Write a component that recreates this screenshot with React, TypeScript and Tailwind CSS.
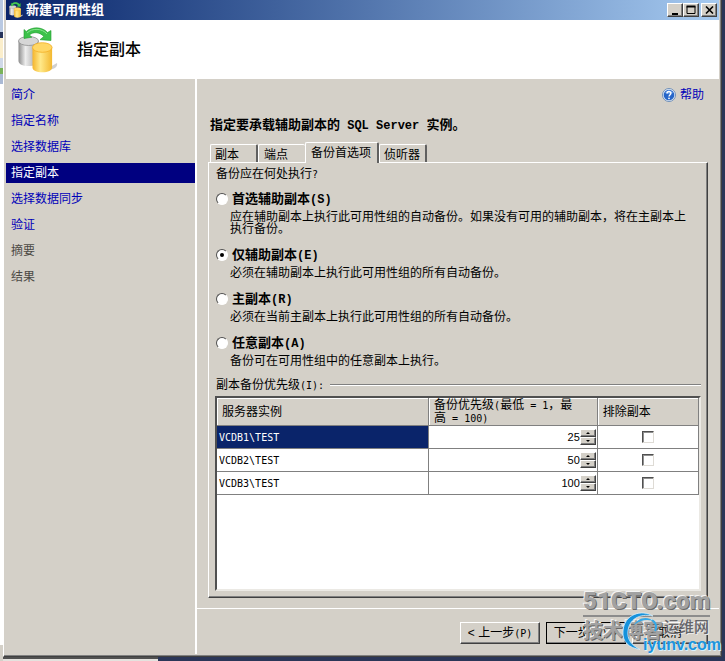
import { useState } from 'react';
import type { ReactNode } from 'react';

const steps = [
  { label: '简介', state: 'done' },
  { label: '指定名称', state: 'done' },
  { label: '选择数据库', state: 'done' },
  { label: '指定副本', state: 'current' },
  { label: '选择数据同步', state: 'done' },
  { label: '验证', state: 'done' },
  { label: '摘要', state: 'pending' },
  { label: '结果', state: 'pending' },
];

const tabs = ['副本', '端点', '备份首选项', '侦听器'];

const options = [
  {
    id: 'prefer',
    label: '首选辅助副本',
    hotkey: '(S)',
    text: '应在辅助副本上执行此可用性组的自动备份。如果没有可用的辅助副本，将在主副本上执行备份。',
  },
  { id: 'only', label: '仅辅助副本', hotkey: '(E)', text: '必须在辅助副本上执行此可用性组的所有自动备份。' },
  { id: 'primary', label: '主副本', hotkey: '(R)', text: '必须在当前主副本上执行此可用性组的所有自动备份。' },
  { id: 'any', label: '任意副本', hotkey: '(A)', text: '备份可在可用性组中的任意副本上执行。' },
];

const servers = [
  { name: 'VCDB1\\TEST', priority: 25 },
  { name: 'VCDB2\\TEST', priority: 50 },
  { name: 'VCDB3\\TEST', priority: 100 },
];

const raised =
  'bg-[#d4d0c8] border border-t-white border-l-white border-r-[#404040] border-b-[#404040] shadow-[inset_-1px_-1px_0_#808080]';

function Latin({ children }: { children: ReactNode }) {
  return <span className="font-['DejaVu_Sans_Mono',monospace] text-[10px] whitespace-pre">{children}</span>;
}

function DatabaseIcon({ className }: { className: string }) {
  return (
    <svg className={className} viewBox="0 0 40 46" aria-hidden="true">
      <defs>
        <linearGradient id="silver" x1="0" x2="1">
          <stop offset="0" stopColor="#8c8c8c" />
          <stop offset="0.35" stopColor="#ededed" />
          <stop offset="1" stopColor="#9a9a9a" />
        </linearGradient>
        <linearGradient id="gold" x1="0" x2="1">
          <stop offset="0" stopColor="#f5b52c" />
          <stop offset="0.4" stopColor="#ffe98a" />
          <stop offset="1" stopColor="#f3b830" />
        </linearGradient>
      </defs>
      <path d="M32 40l7-4c1 4-3 6-8 7z" fill="#d0d0d0" />
      <path d="M0.500 14v20c0 3 4 5 10 5s10-2 10-5V14z" fill="url(#silver)" />
      <ellipse cx="10.500" cy="14" rx="10" ry="4.500" fill="#d6d6d6" stroke="#8f8f8f" strokeWidth="0.800" />
      <path d="M14.500 20.500v20c0 3 4 4.800 9.800 4.800s9.800-1.800 9.800-4.800v-20z" fill="url(#gold)" />
      <ellipse cx="24.300" cy="20.500" rx="9.800" ry="4.800" fill="#ffd766" stroke="#f2ae25" strokeWidth="0.800" />
      <path
        d="M6 2.500l2.300 2C14-.5 24-.5 29.500 5.500L33 3.500V13.500l-11-.8 3.800-3.200C22 5 15 4.500 11.500 8l2.300 2.200L6 11.500z"
        fill="#3cc24a"
        stroke="#229a30"
        strokeWidth="0.600"
      />
      <path d="M9 6C14 1 24 1 29 7" fill="none" stroke="#86e38c" strokeWidth="1" />
    </svg>
  );
}

function HelpIcon() {
  return (
    <svg className="h-3.5 w-3.5" viewBox="0 0 14 14" aria-hidden="true">
      <circle cx="7" cy="7" r="6.500" fill="#e4edf8" stroke="#6f8fb8" />
      <circle cx="7" cy="7" r="5.300" fill="#2766c8" />
      <path d="M3 5a4.400 4.400 0 0 1 8 0C8 6 6 6 3 5z" fill="#6ea4ec" />
      <path d="M5 5.500c0-2.700 4-2.500 3.900-.2C8.900 6.700 7 6.700 7 8.600" fill="none" stroke="#fff" strokeWidth="1.400" />
      <circle cx="7" cy="10.300" r="0.900" fill="#fff" />
    </svg>
  );
}

function TitleBar() {
  const control = `flex h-3.5 w-4 items-center justify-center ${raised}`;
  return (
    <header className="flex h-5 items-center bg-gradient-to-r from-[#0a246a] to-[#a6caf0] pr-0.5 pl-[3px]">
      <DatabaseIcon className="mr-[3px] h-4 w-3.5" />
      <span className="flex-1 text-[13px] leading-5 font-bold text-white">新建可用性组</span>
      <button type="button" aria-label="最小化" className={control}>
        <svg width="10" height="9" viewBox="0 0 10 9">
          <path d="M2 7h6v2H2z" />
        </svg>
      </button>
      <button type="button" aria-label="最大化" className={control}>
        <svg width="10" height="10" viewBox="0 0 10 10">
          <path d="M1 1.500h8v7H1z" fill="none" stroke="#000" />
          <path d="M0.500 0.500h9v2h-9z" />
        </svg>
      </button>
      <button type="button" aria-label="关闭" className={`ml-0.5 ${control}`}>
        <svg width="9" height="8" viewBox="0 0 9 8">
          <path d="M1 .5l7 7M8 .5l-7 7" stroke="#000" strokeWidth="1.600" />
        </svg>
      </button>
    </header>
  );
}

function Sidebar() {
  return (
    <nav className="flex w-[191px] shrink-0 flex-col gap-1.5 border-r-2 border-white pt-1.5">
      {steps.map((step) => (
        <a
          key={step.label}
          href="#"
          className={`h-5 pl-[5px] leading-5 ${
            step.state === 'current'
              ? 'bg-[#000080] text-white'
              : step.state === 'done'
                ? 'text-[#0000b8]'
                : 'text-[#4c4a45]'
          }`}
        >
          {step.label}
        </a>
      ))}
    </nav>
  );
}

function TabStrip() {
  return (
    <div role="tablist" className="flex items-end pl-0.5">
      {tabs.map((tab) => {
        const active = tab === '备份首选项';
        return (
          <button
            key={tab}
            type="button"
            role="tab"
            aria-selected={active}
            className={`rounded-t-[2px] border-t border-l border-white text-left ${
              active
                ? 'relative -mb-px h-[21px] w-[74px] border-r-2 border-r-[#606060] bg-[#d4d0c8] pl-[5px] leading-5'
                : tab === '端点'
                  ? 'h-[18px] w-[47px] pl-[5px] leading-5'
                  : 'h-[18px] w-12 border-r-2 border-r-[#606060] pl-1 leading-5'
            }`}
          >
            {tab}
          </button>
        );
      })}
    </div>
  );
}

function Spinner({ server, value, onChange }: { server: string; value: number; onChange: (v: number) => void }) {
  const arrow = `flex h-2 w-4 items-center justify-center ${raised}`;
  return (
    <div className="flex h-[17px] items-center pr-px">
      <input
        aria-label={`${server} 优先级`}
        value={value}
        onChange={(e) => onChange(Number(e.target.value) || 0)}
        className="h-4 min-w-0 flex-1 bg-transparent text-right font-['Liberation_Sans',sans-serif] text-[11px] leading-4 outline-none"
      />
      <div className="flex flex-col">
        <button type="button" aria-label="增加" className={arrow} onClick={() => onChange(value + 1)}>
          <svg width="4" height="2" viewBox="0 0 4 2">
            <path d="M2 0l2 2H0z" />
          </svg>
        </button>
        <button type="button" aria-label="减少" className={arrow} onClick={() => onChange(value - 1)}>
          <svg width="4" height="2" viewBox="0 0 4 2">
            <path d="M0 0h4L2 2z" />
          </svg>
        </button>
      </div>
    </div>
  );
}

function PriorityTable() {
  const [priorities, setPriorities] = useState(servers.map((s) => s.priority));
  const head = 'h-7 border-b border-[#808080] bg-[#d4d0c8] p-0 text-left font-normal shadow-[inset_1px_1px_0_#fff]';
  return (
    <table className="w-full table-fixed border-separate border-spacing-0" aria-labelledby="priority-title">
      <colgroup>
        <col className="w-[44%]" />
        <col className="w-[35%]" />
        <col className="w-[21%]" />
      </colgroup>
      <thead>
        <tr>
          <th className={`${head} border-r pl-[5px]`}>服务器实例</th>
          <th className={`${head} border-r pl-[5px] leading-3`}>
            备份优先级<Latin>(</Latin>最低<Latin> = 1</Latin>，最
            <br />高<Latin> = 100)</Latin>
          </th>
          <th className={`${head} border-r pl-[5px]`}>排除副本</th>
        </tr>
      </thead>
      <tbody>
        {servers.map((server, i) => (
          <tr key={server.name}>
            <td
              className={`h-[23px] border-r border-b border-[#808080] py-0 pl-0.5 leading-4 ${
                i === 0 ? 'bg-[#0a246a] text-white' : ''
              }`}
            >
              <Latin>{server.name}</Latin>
            </td>
            <td className="h-[23px] border-r border-b border-[#808080] p-0">
              <Spinner
                server={server.name}
                value={priorities[i]}
                onChange={(v) => setPriorities(priorities.map((p, j) => (j === i ? v : p)))}
              />
            </td>
            <td className="h-[23px] border-r border-b border-[#808080] p-0">
              <input
                type="checkbox"
                aria-label={`排除 ${server.name}`}
                className="mx-auto block h-3 w-3 appearance-none border border-t-[#505050] border-r-[#dedbd5] border-b-[#dedbd5] border-l-[#505050] bg-white shadow-[inset_1px_1px_0_#909090] checked:bg-black"
              />
            </td>
          </tr>
        ))}
      </tbody>
    </table>
  );
}

function BackupPreferences() {
  const [selected, setSelected] = useState('only');
  return (
    <section className="flex flex-1 flex-col border border-t-white border-r-[#404040] border-b-[#404040] border-l-white px-1.5 pb-1.5 shadow-[inset_-1px_-1px_0_#808080]">
      <fieldset className="flex flex-col gap-2.5">
        <legend className="mb-1.5 h-5 pt-px pl-px leading-5">
          备份应在何处执行<Latin>?</Latin>
        </legend>
        {options.map((option) => (
          <div key={option.id} className="pl-px">
            <div className="flex h-5 items-center">
              <input
                type="radio"
                id={option.id}
                name="backup"
                checked={selected === option.id}
                onChange={() => setSelected(option.id)}
                className="mr-1 flex h-3 w-3 shrink-0 appearance-none items-center justify-center rounded-full border border-t-[#505050] border-r-white border-b-white border-l-[#505050] bg-white checked:before:h-1 checked:before:w-1 checked:before:rounded-full checked:before:bg-black"
              />
              <label htmlFor={option.id} className="text-[13px] leading-5 font-bold">
                {option.label}
                <span className="font-['Liberation_Mono',monospace] text-xs">{option.hotkey}</span>
              </label>
            </div>
            <p className="mt-0.5 mr-2.5 ml-3.5 leading-3">{option.text}</p>
          </div>
        ))}
      </fieldset>

      <div className="mt-2.5 flex h-4 items-center gap-1.5 pl-px leading-4">
        <h2 id="priority-title">
          副本备份优先级<Latin>(I):</Latin>
        </h2>
        <div className="h-0.5 flex-1 border-t border-b border-t-[#808080] border-b-white" />
      </div>
      <div className="mt-[3px] flex-1 border-2 border-t-[#505050] border-r-[#ebe9e4] border-b-[#ebe9e4] border-l-[#505050] bg-white">
        <PriorityTable />
      </div>
    </section>
  );
}

function Watermark() {
  const grayText = 'text-[#a2a2a2] [text-shadow:1px_1px_0_#6a6a6a,-1px_-1px_0_#f4f4f4]';
  return (
    <div className="pointer-events-none absolute right-0 bottom-1 h-[70px] w-[142px]">
      <div
        className={`absolute top-0 left-0 border-b-2 border-[#8c8c8c] font-['Roboto',sans-serif] text-2xl leading-7 font-black ${grayText}`}
      >
        51CTO.com
      </div>
      <div className={`absolute top-8 left-0 text-xl leading-6 font-bold ${grayText}`}>技术博客</div>
      <svg className="absolute top-6 left-[38px]" width="38" height="42" viewBox="0 0 38 42" aria-hidden="true">
        <path
          d="M32 5C21-2 3 3 2 20c-1 11 6 17 17 18.500C10 34 6 28 7 20 8 9 18 2 32 5z"
          fill="#1592dc"
          stroke="#d9f0fd"
          strokeWidth="0.800"
        />
        <path d="M13 14C17 7 26 4 34 11c-5-3-14-3-21 3z" fill="#36a9e8" />
        <path d="M31 9c4 3 5 7 3 11" fill="none" stroke="#36a9e8" strokeWidth="2" />
      </svg>
      <div className="absolute top-[30px] right-4 text-[15px] leading-5 font-medium text-[#66666a] [text-shadow:1px_1px_0_#e8e8e8]">
        运维网
      </div>
      <div className="absolute right-1 bottom-0.5 font-['Liberation_Sans',sans-serif] text-base leading-5 font-bold text-[#1b95dc] [text-shadow:1px_1px_0_#d9f0fd]">
        iyunv.com
      </div>
    </div>
  );
}

export default function App() {
  const action = `h-[22px] text-center leading-5 ${raised}`;
  return (
    <div className="relative flex min-h-screen bg-[#2b3658] font-['Liberation_Sans','Noto_Sans_CJK_SC',sans-serif] text-xs text-black">
      {/* Sliver of the window behind */}
      <div className="flex w-[3px] flex-col bg-white">
        <div className="h-8 bg-[#b9c9e2]" />
        <div className="h-1.5 bg-[#26345c]" />
        <div className="h-5 bg-[#fbeecb]" />
        <div className="h-2.5 bg-[#cfd8e8]" />
        <div className="h-1.5 bg-[#79b35a]" />
        <div className="h-2.5 bg-[#aab9d4]" />
        <div className="flex-1" />
        <div className="h-4 bg-[#d4d0c8]" />
      </div>

      <div className="flex min-w-0 flex-1 flex-col">
        <div className="mr-[3px] flex flex-1 flex-col border border-t-0 border-r-[#404040] border-b-[#404040] border-l-white bg-[#d4d0c8] px-0.5 pb-0.5 shadow-[inset_-1px_-1px_0_#808080]">
          <TitleBar />
          <div className="flex h-[59px] items-center bg-white pl-3">
            <DatabaseIcon className="h-[46px] w-10" />
            <h1 className="ml-[19px] text-base leading-6 font-medium">指定副本</h1>
          </div>

          <div className="flex flex-1">
            <Sidebar />
            <main className="flex min-w-0 flex-1 flex-col">
              <div className="flex flex-1 flex-col pr-[11px] pb-2.5 pl-[11px]">
                <div className="flex h-8 justify-end pt-1.5 pr-1">
                  <a href="#" className="flex h-5 items-center gap-1 leading-5 text-[#0000b8]">
                    <HelpIcon />
                    帮助
                  </a>
                </div>
                <p className="mt-1 mb-[7px] pl-0.5 text-[13px] leading-5 font-bold">
                  指定要承载辅助副本的
                  <span className="font-['Liberation_Mono',monospace] text-xs"> SQL Server </span>
                  实例。
                </p>
                <TabStrip />
                <BackupPreferences />
              </div>
              <footer className="flex justify-end gap-1.5 border-t border-white pt-[13px] pr-[11px] pb-2.5">
                <button type="button" className={`w-20 ${action}`}>
                  &lt; 上一步<Latin>(P)</Latin>
                </button>
                <button type="button" className={`w-20 outline-1 -outline-offset-1 outline-black ${action}`}>
                  下一步<Latin>(N)</Latin> &gt;
                </button>
                <button type="button" className={`w-[76px] ${action}`}>
                  取消
                </button>
              </footer>
            </main>
          </div>
        </div>
        <div className="h-1">
          <div className="h-1 w-[155px] border-t-2 border-[#505050] bg-[#e4e2de]" />
        </div>
      </div>

      <Watermark />
    </div>
  );
}
